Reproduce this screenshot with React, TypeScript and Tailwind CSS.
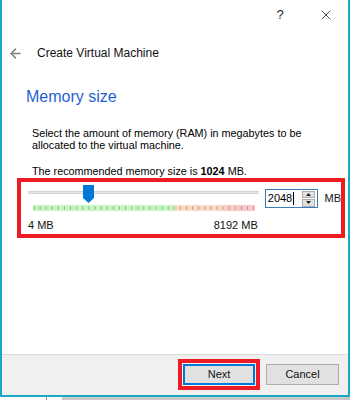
import { ArrowLeft, X } from "lucide-react";

const font = { fontFamily: '"Liberation Sans", Arial, sans-serif' };

const TickBar = () => {
  const ticks = Array.from({ length: 37 }, (_, i) => 1 + i * 6.1);
  return (
    <svg width="222" height="6" viewBox="0 0 222 6" className="block">
      <rect x="0" y="0" width="142" height="6" fill="#c4f7c0" />
      <rect x="142" y="0" width="50" height="6" fill="#fed6c4" />
      <rect x="192" y="0" width="30" height="6" fill="#ffc6c6" />
      {ticks.map((t) => (
        <line key={t} x1={t} x2={t} y1="1.5" y2="4.5" stroke="#9aa09a" strokeWidth="1" />
      ))}
    </svg>
  );
};

const SpinBox = () => (
  <div className="mt-[7px] ml-[6px] w-[53px] h-[19px] border border-[#3d7bbf] bg-white flex items-center">
    <span className="pl-[2px] text-[11px] leading-[13px] text-black flex-1 flex items-center">
      2048<span className="inline-block w-px h-[13px] bg-black ml-[1px]" />
    </span>
    <div className="mr-[2px] w-[13px] h-[16px] flex flex-col gap-px">
      <div className="flex-1 bg-[#e1e1e1] border border-[#adadad] flex items-center justify-center">
        <svg width="5" height="3" viewBox="0 0 5 3"><path d="M2.5 0 L5 3 L0 3 Z" fill="#222" /></svg>
      </div>
      <div className="flex-1 bg-[#e1e1e1] border border-[#adadad] flex items-center justify-center">
        <svg width="5" height="3" viewBox="0 0 5 3"><path d="M0 0 L5 0 L2.5 3 Z" fill="#222" /></svg>
      </div>
    </div>
  </div>
);

export default function App() {
  return (
    <div className="w-[350px] h-[400px] bg-white overflow-hidden text-[#1a1a1a]" style={font}>
      <div className="h-[397px] flex flex-col border-l-2 border-r-2 border-b-2 border-[#1aa8c8]">
        <div className="h-[30px] flex justify-end items-center">
          <div className="w-[46px] pl-[2px] text-center text-[13px] text-[#222]">?</div>
          <div className="w-[46px] flex justify-center pl-px">
            <X size={16} strokeWidth={1.2} className="text-[#222]" />
          </div>
        </div>

        <div className="h-[46px] flex items-center pl-[6px]">
          <ArrowLeft size={15} strokeWidth={2.4} className="text-[#808080]" />
          <span className="ml-[14px] text-[12px] text-[#111]">Create Virtual Machine</span>
        </div>

        <div className="flex-1 flex flex-col">
          <h1 className="mt-[11px] pl-[24px] text-[16px] leading-[20px] text-[#1f5fd4]">Memory size</h1>
          <div className="pl-[30px] mt-[20px] text-[10.8px] leading-[12px] text-black">
            <p>Select the amount of memory (RAM) in megabytes to be</p>
            <p>allocated to the virtual machine.</p>
            <p className="mt-[14px]">
              The recommended memory size is <b>1024</b> MB.
            </p>
          </div>

          <div className="mt-[1px] ml-[15px] w-[328px] h-[60px] border-4 border-[#ed1c24] flex">
            <div className="relative ml-[7px] w-[232px] flex flex-col">
              <div className="mt-[9px] h-[3px] bg-[#e6e6e6] border-y border-[#d4d4d4]" />
              <div className="absolute left-[55px] top-[3px] w-[11px] h-[18px]">
                <svg width="11" height="18" viewBox="0 0 11 18">
                  <path d="M0 0 H11 V13 L5.5 18 L0 13 Z" fill="#0078d7" />
                </svg>
              </div>
              <div className="mt-[11px] ml-[5px]">
                <TickBar />
              </div>
              <div className="mt-[8px] flex justify-between text-[11px] leading-[13px] text-[#111]">
                <span>4 MB</span>
                <span className="pr-px">8192 MB</span>
              </div>
            </div>
            <SpinBox />
            <span className="ml-[7px] mt-[10px] text-[11px] leading-[13px] text-[#111]">MB</span>
          </div>
        </div>

        <div className="h-[41px] bg-[#f0f0f0] border-t border-[#dadada] flex items-start pt-[4px]">
          <div className="ml-[176px] w-[82px] h-[31px] border-4 border-[#ed1c24] flex items-center justify-center">
            <button className="w-[72px] h-[21px] bg-[#e1e1e1] border-2 border-[#0078d7] text-[11px] text-[#111]">
              Next
            </button>
          </div>
          <button className="mt-[5px] ml-[6px] w-[73px] h-[21px] bg-[#e1e1e1] border border-[#adadad] text-[11px] text-[#111]">
            Cancel
          </button>
        </div>
      </div>
      <div className="h-[3px] flex">
        <div className="ml-[46px] w-px bg-[#8a8a8a]" />
        <div className="ml-[15px] flex-1 bg-[#c8c8c8]" />
      </div>
    </div>
  );
}
